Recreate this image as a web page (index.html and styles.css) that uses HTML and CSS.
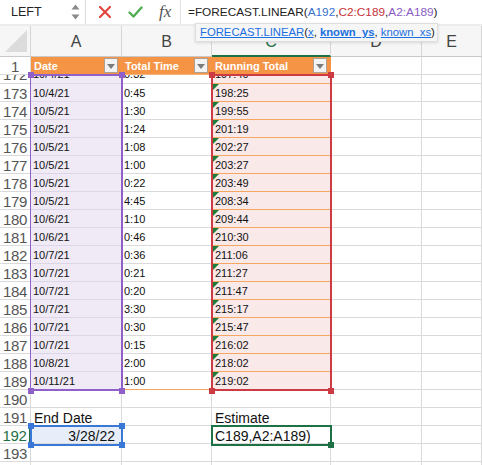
FILE: index.html
```html
<!DOCTYPE html>
<html>
<head>
<meta charset="utf-8">
<link rel="stylesheet" href="styles.css">
</head>
<body>
<div class="app">
  <div class="fbar">
    <div class="namebox">
      <span class="name">LEFT</span>
      <svg class="spin" width="9" height="18" viewBox="0 0 9 18"><path d="M0.5 6.5 L4.5 1.5 L8.5 6.5 Z" fill="#8a8a8a"/><path d="M0.5 11.5 L4.5 16.5 L8.5 11.5 Z" fill="#8a8a8a"/></svg>
    </div>
    <div class="fbtns">
      <svg class="ico-x" width="12" height="12" viewBox="0 0 12 12"><path d="M1 1 L11 11 M11 1 L1 11" stroke="#e2453f" stroke-width="2.2" stroke-linecap="round"/></svg>
      <svg class="ico-ok" width="15" height="12" viewBox="0 0 15 12"><path d="M1.5 6.5 L5.5 10.5 L13.5 1.5" fill="none" stroke="#4cae50" stroke-width="2.3" stroke-linecap="round" stroke-linejoin="round"/></svg>
      <span class="fx">fx</span>
    </div>
    <div class="formula">=FORECAST.LINEAR(<span class="rb">A192</span>,<span class="rr">C2:C189</span>,<span class="rp">A2:A189</span>)</div>
  </div>

  <div class="tooltip"><span class="lnk">FORECAST.LINEAR</span>(<span class="lnk">x</span>, <span class="lnk b">known_ys</span>, <span class="lnk">known_xs</span>)</div>

  <div class="sheet">
    <div class="row colhead">
      <div class="corner"><svg width="22" height="22" viewBox="0 0 22 22"><path d="M22 0 L22 22 L0 22 Z" fill="#dcdcdc"/></svg></div>
      <div class="ch">A</div><div class="ch">B</div><div class="ch csel">C</div><div class="ch">D</div><div class="ch">E</div>
    </div>

    <div class="row r1">
      <div class="rh">1</div>
      <div class="th"><span>Date</span><i class="dd"></i></div>
      <div class="th"><span>Total Time</span><i class="dd"></i></div>
      <div class="th"><span>Running Total</span><i class="dd"></i></div>
      <div class="cell"></div><div class="cell"></div>
    </div>

    <div class="row partial">
      <div class="rh"><span>172</span></div><div class="cell ca"><span>10/4/21</span></div><div class="cell"><span>0:32</span></div><div class="cell cc"><span>197:40</span></div><div class="cell"></div><div class="cell"></div>
    </div>
    <div class="row"><div class="rh">173</div><div class="cell ca">10/4/21</div><div class="cell">0:45</div><div class="cell cc"><i class="tri"></i>198:25</div><div class="cell"></div><div class="cell"></div></div>
    <div class="row"><div class="rh">174</div><div class="cell ca">10/5/21</div><div class="cell">1:30</div><div class="cell cc"><i class="tri"></i>199:55</div><div class="cell"></div><div class="cell"></div></div>
    <div class="row"><div class="rh">175</div><div class="cell ca">10/5/21</div><div class="cell">1:24</div><div class="cell cc"><i class="tri"></i>201:19</div><div class="cell"></div><div class="cell"></div></div>
    <div class="row"><div class="rh">176</div><div class="cell ca">10/5/21</div><div class="cell">1:08</div><div class="cell cc"><i class="tri"></i>202:27</div><div class="cell"></div><div class="cell"></div></div>
    <div class="row"><div class="rh">177</div><div class="cell ca">10/5/21</div><div class="cell">1:00</div><div class="cell cc"><i class="tri"></i>203:27</div><div class="cell"></div><div class="cell"></div></div>
    <div class="row"><div class="rh">178</div><div class="cell ca">10/5/21</div><div class="cell">0:22</div><div class="cell cc"><i class="tri"></i>203:49</div><div class="cell"></div><div class="cell"></div></div>
    <div class="row"><div class="rh">179</div><div class="cell ca">10/5/21</div><div class="cell">4:45</div><div class="cell cc"><i class="tri"></i>208:34</div><div class="cell"></div><div class="cell"></div></div>
    <div class="row"><div class="rh">180</div><div class="cell ca">10/6/21</div><div class="cell">1:10</div><div class="cell cc"><i class="tri"></i>209:44</div><div class="cell"></div><div class="cell"></div></div>
    <div class="row"><div class="rh">181</div><div class="cell ca">10/6/21</div><div class="cell">0:46</div><div class="cell cc"><i class="tri"></i>210:30</div><div class="cell"></div><div class="cell"></div></div>
    <div class="row"><div class="rh">182</div><div class="cell ca">10/7/21</div><div class="cell">0:36</div><div class="cell cc"><i class="tri"></i>211:06</div><div class="cell"></div><div class="cell"></div></div>
    <div class="row"><div class="rh">183</div><div class="cell ca">10/7/21</div><div class="cell">0:21</div><div class="cell cc"><i class="tri"></i>211:27</div><div class="cell"></div><div class="cell"></div></div>
    <div class="row"><div class="rh">184</div><div class="cell ca">10/7/21</div><div class="cell">0:20</div><div class="cell cc"><i class="tri"></i>211:47</div><div class="cell"></div><div class="cell"></div></div>
    <div class="row"><div class="rh">185</div><div class="cell ca">10/7/21</div><div class="cell">3:30</div><div class="cell cc"><i class="tri"></i>215:17</div><div class="cell"></div><div class="cell"></div></div>
    <div class="row"><div class="rh">186</div><div class="cell ca">10/7/21</div><div class="cell">0:30</div><div class="cell cc"><i class="tri"></i>215:47</div><div class="cell"></div><div class="cell"></div></div>
    <div class="row"><div class="rh">187</div><div class="cell ca">10/7/21</div><div class="cell">0:15</div><div class="cell cc"><i class="tri"></i>216:02</div><div class="cell"></div><div class="cell"></div></div>
    <div class="row"><div class="rh">188</div><div class="cell ca">10/8/21</div><div class="cell">2:00</div><div class="cell cc"><i class="tri"></i>218:02</div><div class="cell"></div><div class="cell"></div></div>
    <div class="row last"><div class="rh">189</div><div class="cell ca">10/11/21</div><div class="cell cb-last">1:00</div><div class="cell cc"><i class="tri"></i>219:02</div><div class="cell"></div><div class="cell"></div></div>
    <div class="row"><div class="rh">190</div><div class="cell"></div><div class="cell"></div><div class="cell"></div><div class="cell"></div><div class="cell"></div></div>
    <div class="row big"><div class="rh">191</div><div class="cell">End Date</div><div class="cell"></div><div class="cell">Estimate</div><div class="cell"></div><div class="cell"></div></div>
    <div class="row big"><div class="rh rh-act">192</div><div class="cell sel-a">3/28/22</div><div class="cell"></div><div class="cell">C189,A2:A189)</div><div class="cell"></div><div class="cell"></div></div>
    <div class="row"><div class="rh">193</div><div class="cell"></div><div class="cell"></div><div class="cell"></div><div class="cell"></div><div class="cell"></div></div>
    <div class="row"><div class="rh">194</div><div class="cell"></div><div class="cell"></div><div class="cell"></div><div class="cell"></div><div class="cell"></div></div>

    <div class="rng rng-purple"></div>
    <div class="rng rng-red"></div>
    <div class="rng rng-blue"></div>
    <div class="rng rng-green"></div>
    <i class="hd hp" style="left:28px;top:46px"></i>
    <i class="hd hp" style="left:119px;top:46px"></i>
    <i class="hd hp" style="left:28px;top:362px"></i>
    <i class="hd hp" style="left:119px;top:362px"></i>
    <i class="hd hr" style="left:209px;top:46px"></i>
    <i class="hd hr" style="left:328px;top:46px"></i>
    <i class="hd hr" style="left:209px;top:362px"></i>
    <i class="hd hr" style="left:328px;top:362px"></i>
    <i class="hd hb" style="left:28px;top:397px"></i>
    <i class="hd hb" style="left:119px;top:397px"></i>
    <i class="hd hb" style="left:28px;top:416px"></i>
    <i class="hd hb" style="left:119px;top:416px"></i>
    <i class="hd hg" style="left:328px;top:416px"></i>
  </div>
</div>
</body>
</html>
```

FILE: styles.css
```css
* { box-sizing: border-box; }
html, body { margin: 0; padding: 0; }
body {
  font-family: "Liberation Sans", Arial, sans-serif;
  background: #fff;
  width: 482px;
  height: 465px;
  overflow: hidden;
  color: #111;
}
.app { position: relative; width: 482px; height: 465px; overflow: hidden; }

/* formula bar */
.fbar {
  display: flex;
  height: 26px;
  background: #fff;
  border-bottom: 2px solid #ececec;
}
.namebox {
  width: 86px;
  display: flex;
  align-items: center;
  justify-content: space-between;
  padding: 0 5px 0 11px;
  border-right: 1px solid #dcdcdc;
}
.name { font-size: 12.5px; color: #222; }
.spin { display: block; }
.fbtns {
  width: 95px;
  display: flex;
  align-items: center;
  padding-left: 13px;
  border-right: 1px solid #e2e2e2;
}
.ico-x { margin-right: 17px; }
.ico-ok { margin-right: 16px; }
.fx {
  font-family: "Liberation Serif", "DejaVu Serif", serif;
  font-style: italic;
  font-size: 17px;
  color: #555;
  line-height: 20px;
}
.formula {
  padding-left: 7px;
  font-size: 11.8px;
  line-height: 24px;
  color: #222;
  white-space: nowrap;
}
.rb { color: #3a6fd0; }
.rr { color: #c8323c; }
.rp { color: #8b5cc4; }

/* tooltip */
.tooltip {
  position: absolute;
  left: 195px;
  top: 23px;
  width: 243px;
  height: 19px;
  background: #f6f6f6;
  border: 1px solid #dedede;
  box-shadow: 0 1px 3px rgba(0,0,0,0.12);
  font-size: 11.3px;
  line-height: 17px;
  padding-left: 4px;
  color: #222;
  white-space: nowrap;
  z-index: 5;
}
.lnk { color: #1a6fe0; text-decoration: underline; }
.b { font-weight: bold; }

/* sheet */
.sheet { position: relative; }
.row {
  display: grid;
  grid-template-columns: 31px 91px 90px 119px 91px 60px;
  grid-template-rows: minmax(0, 1fr);
  height: 18px;
  overflow: hidden;
}
.cell, .rh, .th, .ch, .corner {
  border-right: 1px solid #dadada;
  border-bottom: 1px solid #dadada;
  overflow: hidden;
  white-space: nowrap;
  min-height: 0;
}
.cell {
  font-size: 11px;
  line-height: 19px;
  padding-left: 2px;
  position: relative;
}
.rh {
  text-align: center;
  font-size: 15px;
  line-height: 19px;
  color: #555;
  letter-spacing: -0.3px;
  background: #fff;
}

.colhead { height: 31px; background: #f6f6f6; }
.colhead .corner, .colhead .ch { border-bottom: 1px solid #c9c9c9; border-right: 1px solid #d6d6d6; }
.corner { display: flex; align-items: flex-end; justify-content: flex-end; padding: 0 3px 4px 0; }
.ch {
  font-size: 16px;
  color: #444;
  text-align: center;
  line-height: 31px;
}
.ch.csel { color: #1e7145; border-bottom: 2px solid #1e7145; }

/* header row */
.th {
  background: #f59445;
  border-right-color: #f59445;
  border-bottom-color: #f5b27a;
  color: #fff;
  font-weight: bold;
  font-size: 11px;
  display: flex;
  align-items: center;
  justify-content: space-between;
  padding: 0 3px 0 3px;
}
.dd {
  width: 14px;
  height: 15px;
  background: #f3f3f3;
  border: 1px solid #b0a090;
  position: relative;
  flex: none;
}
.dd::after {
  content: "";
  position: absolute;
  left: 2px;
  top: 5px;
  border-left: 4px solid transparent;
  border-right: 4px solid transparent;
  border-top: 5px solid #7a7a7a;
}

/* partial row: only the lower half is visible */
.row.partial { height: 9px; }
.partial > div > span { display: block; margin-top: -10px; line-height: 19px; }
.partial > .rh > span { margin-top: -10px; }

/* table columns */
.ca { background: #efeaf6; border-bottom-color: #dcd6e6; }
.cc { background: #f9e9e9; border-bottom-color: #f5a661; padding-left: 3px; }
.cb-last { border-bottom-color: #f5a661; }
.tri {
  position: absolute;
  left: 1px;
  top: 0;
  width: 0;
  height: 0;
  border-top: 6px solid #1c7c3a;
  border-right: 6px solid transparent;
}

.big .cell { font-size: 14px; line-height: 20px; padding-left: 3px; }
.sel-a { background: #e7eef9; text-align: right; padding-right: 6px; }
.rh-act { color: #1e7145; border-right: 2px solid #1e7145; }

/* range outlines (overlays) */
.rng { position: absolute; pointer-events: none; }
.rng-purple { left: 30px; top: 48px; width: 93px; height: 317px; border: 2px solid #8e60c8; border-left-width: 1px; }
.rng-red { left: 211px; top: 48px; width: 121px; height: 317px; border: 2px solid #cc3a44; }
.rng-blue { left: 30px; top: 399px; width: 93px; height: 21px; border: 2px solid #3a78d8; }
.rng-green { left: 211px; top: 399px; width: 121px; height: 21px; border: 2px solid #1e7145; }
.hd { position: absolute; width: 6px; height: 6px; }
.hp { background: #8e60c8; }
.hr { background: #cc3a44; }
.hb { background: #3a78d8; }
.hg { background: #1e7145; }
```
